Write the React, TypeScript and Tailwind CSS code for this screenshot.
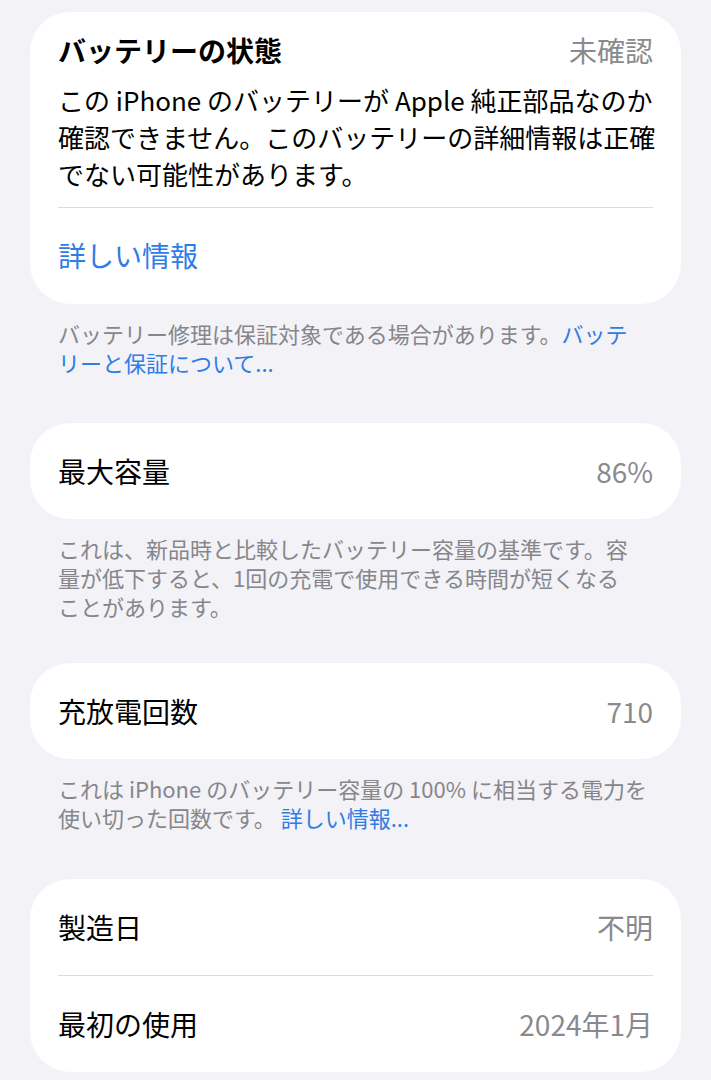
import React from "react";

const font = { fontFamily: '"Noto Sans CJK JP", "Noto Sans", sans-serif' };

function Row({ label, value }: { label: string; value: string }) {
  return (
    <div className="flex h-[96px] items-center justify-between">
      <span className="text-[28px] text-black">{label}</span>
      <span className="text-[28px] text-[#8a8a8e]">{value}</span>
    </div>
  );
}

function Footer({ children }: { children: React.ReactNode }) {
  return (
    <p className="mt-[15px] px-[28px] text-[22px] leading-[29px] text-[#86868b] whitespace-nowrap">
      {children}
    </p>
  );
}

export default function App() {
  return (
    <div className="min-h-[1080px] w-[711px] overflow-hidden bg-[#f2f2f7] px-[30px] pt-[12px]" style={font}>
      <div className="rounded-[40px] bg-white px-[28px] pt-[20px]">
        <div className="flex h-[36px] items-center justify-between">
          <span className="text-[28px] font-bold text-black">バッテリーの状態</span>
          <span className="text-[28px] text-[#8a8a8e]">未確認</span>
        </div>
        <p className="mt-[13px] text-[26px] leading-[37px] text-black whitespace-nowrap">
          この iPhone のバッテリーが Apple 純正部品なのか
          <br />
          確認できません。このバッテリーの詳細情報は正確
          <br />
          でない可能性があります。
        </p>
        <div className="mt-[15px] h-px bg-[#dcdce0]" />
        <div className="flex h-[96px] items-center pb-[2px]">
          <span className="text-[28px] text-[#2f7ce6]">詳しい情報</span>
        </div>
      </div>
      <Footer>
        バッテリー修理は保証対象である場合があります。<span className="text-[#2f7ce6]">バッテ</span>
        <br />
        <span className="text-[#2f7ce6]">リーと保証について...</span>
      </Footer>

      <div className="mt-[46px] rounded-[40px] bg-white px-[28px]">
        <Row label="最大容量" value="86%" />
      </div>
      <Footer>
        これは、新品時と比較したバッテリー容量の基準です。容
        <br />
        量が低下すると、1回の充電で使用できる時間が短くなる
        <br />
        ことがあります。
      </Footer>

      <div className="mt-[42px] rounded-[40px] bg-white px-[28px]">
        <Row label="充放電回数" value="710" />
      </div>
      <Footer>
        これは iPhone のバッテリー容量の 100% に相当する電力を
        <br />
        使い切った回数です。 <span className="text-[#2f7ce6]">詳しい情報...</span>
      </Footer>

      <div className="mt-[47px] rounded-[40px] bg-white px-[28px]">
        <Row label="製造日" value="不明" />
        <div className="h-px bg-[#dcdce0]" />
        <Row label="最初の使用" value="2024年1月" />
      </div>
    </div>
  );
}
